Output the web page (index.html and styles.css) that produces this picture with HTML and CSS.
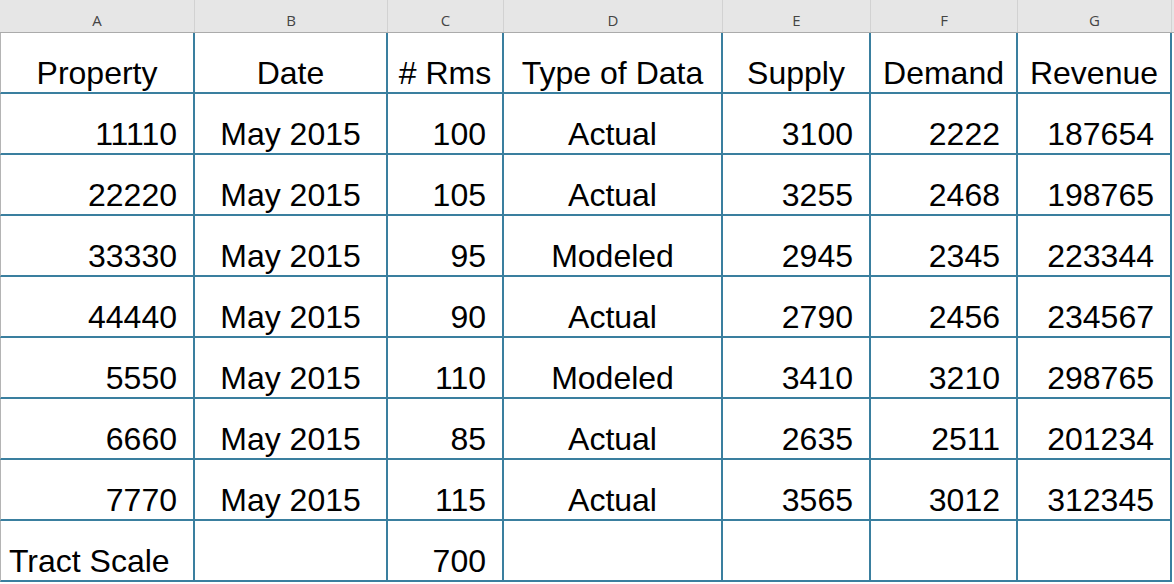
FILE: index.html
```html
<!DOCTYPE html>
<html>
<head>
<meta charset="utf-8">
<link rel="stylesheet" href="styles.css">
</head>
<body>
<div class="sheet">
  <div class="colbar">
    <div class="colhead">A</div>
    <div class="colhead">B</div>
    <div class="colhead">C</div>
    <div class="colhead">D</div>
    <div class="colhead">E</div>
    <div class="colhead">F</div>
    <div class="colhead">G</div>
  </div>
  <div class="grid">
    <div class="cell first c">Property</div>
    <div class="cell c">Date</div>
    <div class="cell c"># Rms</div>
    <div class="cell c">Type of Data</div>
    <div class="cell c">Supply</div>
    <div class="cell c">Demand</div>
    <div class="cell c">Revenue</div>

    <div class="cell first r">11110</div>
    <div class="cell c">May 2015</div>
    <div class="cell r">100</div>
    <div class="cell c">Actual</div>
    <div class="cell r">3100</div>
    <div class="cell r">2222</div>
    <div class="cell r">187654</div>

    <div class="cell first r">22220</div>
    <div class="cell c">May 2015</div>
    <div class="cell r">105</div>
    <div class="cell c">Actual</div>
    <div class="cell r">3255</div>
    <div class="cell r">2468</div>
    <div class="cell r">198765</div>

    <div class="cell first r">33330</div>
    <div class="cell c">May 2015</div>
    <div class="cell r">95</div>
    <div class="cell c">Modeled</div>
    <div class="cell r">2945</div>
    <div class="cell r">2345</div>
    <div class="cell r">223344</div>

    <div class="cell first r">44440</div>
    <div class="cell c">May 2015</div>
    <div class="cell r">90</div>
    <div class="cell c">Actual</div>
    <div class="cell r">2790</div>
    <div class="cell r">2456</div>
    <div class="cell r">234567</div>

    <div class="cell first r">5550</div>
    <div class="cell c">May 2015</div>
    <div class="cell r">110</div>
    <div class="cell c">Modeled</div>
    <div class="cell r">3410</div>
    <div class="cell r">3210</div>
    <div class="cell r">298765</div>

    <div class="cell first r">6660</div>
    <div class="cell c">May 2015</div>
    <div class="cell r">85</div>
    <div class="cell c">Actual</div>
    <div class="cell r">2635</div>
    <div class="cell r">2511</div>
    <div class="cell r">201234</div>

    <div class="cell first r">7770</div>
    <div class="cell c">May 2015</div>
    <div class="cell r">115</div>
    <div class="cell c">Actual</div>
    <div class="cell r">3565</div>
    <div class="cell r">3012</div>
    <div class="cell r">312345</div>

    <div class="cell first l">Tract Scale</div>
    <div class="cell c"></div>
    <div class="cell r">700</div>
    <div class="cell c"></div>
    <div class="cell c"></div>
    <div class="cell c"></div>
    <div class="cell c"></div>
  </div>
</div>
</body>
</html>
```

FILE: styles.css
```css
html, body {
  margin: 0;
  padding: 0;
  background: #ffffff;
}

.sheet {
  width: 1174px;
  height: 584px;
  overflow: hidden;
  font-family: "Liberation Sans", sans-serif;
}

.colbar {
  display: grid;
  grid-template-columns: 195px 193px 116px 219px 148px 147px 154px;
  height: 33px;
  box-sizing: border-box;
  background: #e6e6e6;
  border-bottom: 1px solid #ababab;
}

.colhead {
  display: flex;
  align-items: flex-end;
  justify-content: center;
  padding-bottom: 2px;
  box-sizing: border-box;
  border-right: 1px solid #d2d2d2;
  font-size: 15px;
  color: #444444;
  font-family: "Open Sans", sans-serif;
}

.grid {
  display: grid;
  grid-template-columns: 195px 193px 116px 219px 148px 147px 154px;
  grid-auto-rows: 61px;
}

.cell {
  display: flex;
  align-items: flex-end;
  box-sizing: border-box;
  border-right: 2px solid #3a7f9f;
  border-bottom: 2px solid #3a7f9f;
  font-family: "Liberation Sans", sans-serif;
  font-size: 32px;
  line-height: 1;
  padding-bottom: 3px;
  color: #000000;
  white-space: nowrap;
}

.first {
  border-left: 1px solid #b4b4b4;
}

.c {
  justify-content: center;
}

.r {
  justify-content: flex-end;
  padding-right: 16px;
}

.l {
  justify-content: flex-start;
  padding-left: 8px;
}
```
